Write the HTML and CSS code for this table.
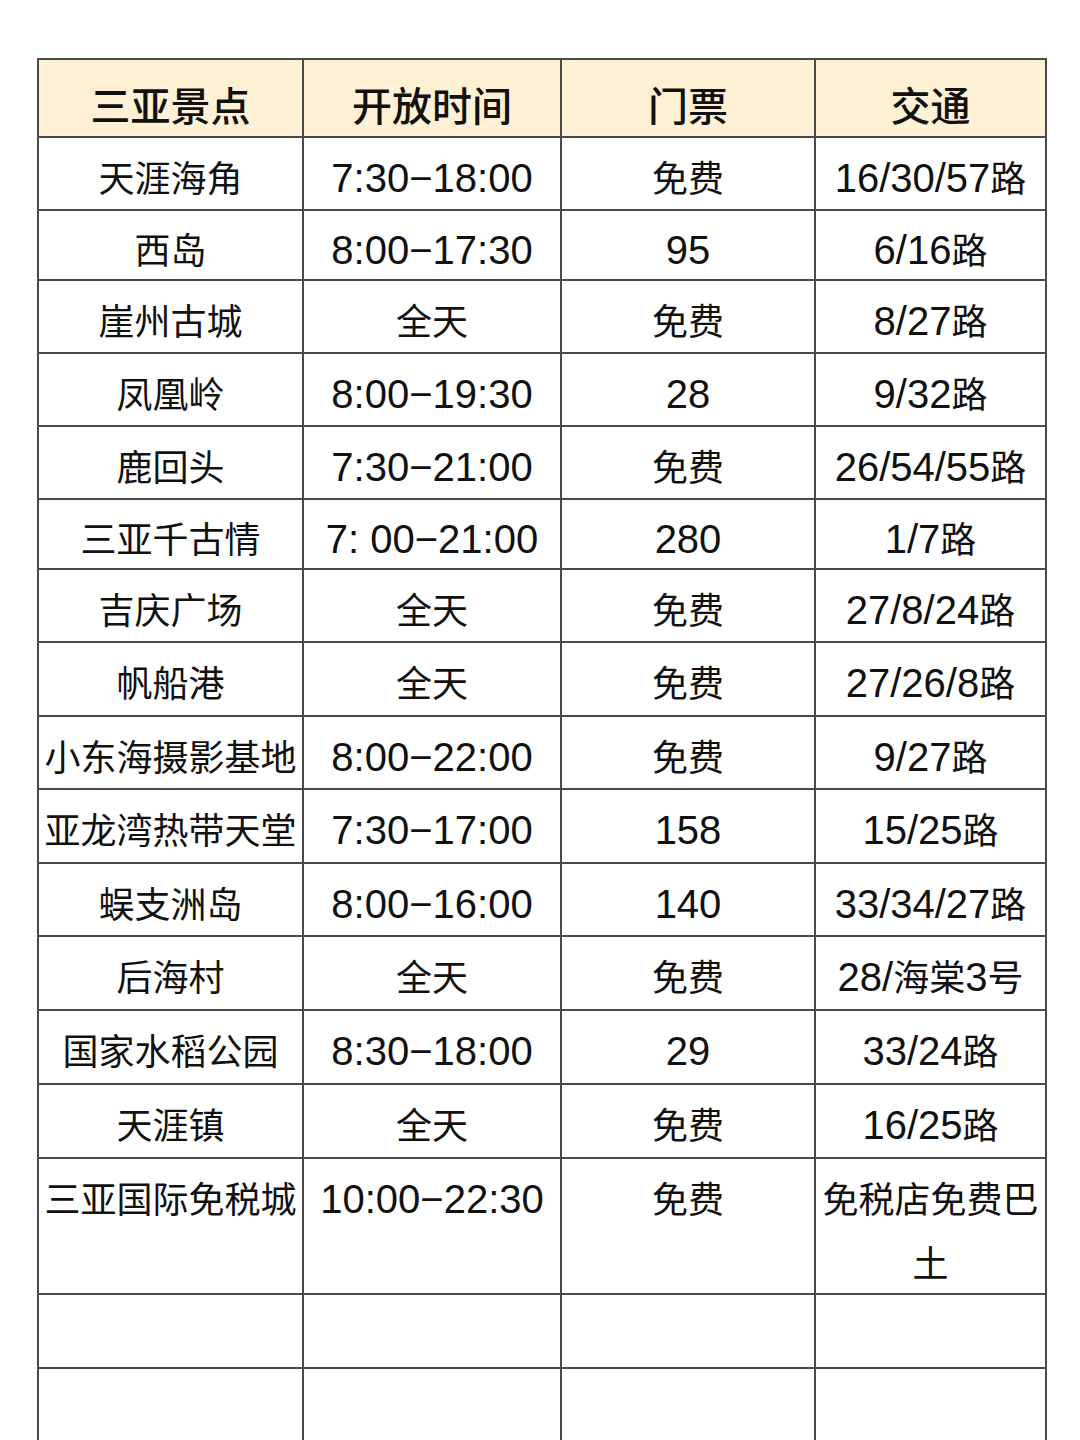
FILE: index.html
```html
<!DOCTYPE html>
<html lang="zh-CN">
<head>
<meta charset="utf-8">
<title>三亚景点</title>
<link rel="stylesheet" href="styles.css">
</head>
<body>
<table class="sheet">
  <colgroup>
    <col class="c1"><col class="c2"><col class="c3"><col class="c4">
  </colgroup>
  <thead>
    <tr class="head"><th>三亚景点</th><th>开放时间</th><th>门票</th><th>交通</th></tr>
  </thead>
  <tbody>
    <tr><td>天涯海角</td><td><span class="n">7:30−18:00</span></td><td>免费</td><td><span class="n">16/30/57</span>路</td></tr>
    <tr class="short"><td>西岛</td><td><span class="n">8:00−17:30</span></td><td><span class="n">95</span></td><td><span class="n">6/16</span>路</td></tr>
    <tr><td>崖州古城</td><td>全天</td><td>免费</td><td><span class="n">8/27</span>路</td></tr>
    <tr><td>凤凰岭</td><td><span class="n">8:00−19:30</span></td><td><span class="n">28</span></td><td><span class="n">9/32</span>路</td></tr>
    <tr><td>鹿回头</td><td><span class="n">7:30−21:00</span></td><td>免费</td><td><span class="n">26/54/55</span>路</td></tr>
    <tr class="short"><td>三亚千古情</td><td><span class="n">7: 00−21:00</span></td><td><span class="n">280</span></td><td><span class="n">1/7</span>路</td></tr>
    <tr><td>吉庆广场</td><td>全天</td><td>免费</td><td><span class="n">27/8/24</span>路</td></tr>
    <tr class="wide"><td>帆船港</td><td>全天</td><td>免费</td><td><span class="n">27/26/8</span>路</td></tr>
    <tr><td>小东海摄影基地</td><td><span class="n">8:00−22:00</span></td><td>免费</td><td><span class="n">9/27</span>路</td></tr>
    <tr class="wide"><td>亚龙湾热带天堂</td><td><span class="n">7:30−17:00</span></td><td><span class="n">158</span></td><td><span class="n">15/25</span>路</td></tr>
    <tr><td>蜈支洲岛</td><td><span class="n">8:00−16:00</span></td><td><span class="n">140</span></td><td><span class="n">33/34/27</span>路</td></tr>
    <tr class="wide"><td>后海村</td><td>全天</td><td>免费</td><td><span class="n">28/</span>海棠<span class="n">3</span>号</td></tr>
    <tr class="wide"><td>国家水稻公园</td><td><span class="n">8:30−18:00</span></td><td><span class="n">29</span></td><td><span class="n">33/24</span>路</td></tr>
    <tr class="wide"><td>天涯镇</td><td>全天</td><td>免费</td><td><span class="n">16/25</span>路</td></tr>
    <tr class="tall"><td>三亚国际免税城</td><td><span class="n">10:00−22:30</span></td><td>免费</td><td>免税店免费巴土</td></tr>
    <tr class="wide"><td></td><td></td><td></td><td></td></tr>
    <tr class="wide"><td></td><td></td><td></td><td></td></tr>
  </tbody>
</table>
</body>
</html>
```

FILE: styles.css
```css
html, body {
  margin: 0;
  padding: 0;
  background: #ffffff;
}

body {
  font-family: "Noto Sans CJK SC", "Liberation Sans", sans-serif;
  color: #111111;
  overflow: hidden;
}

.sheet {
  border-collapse: collapse;
  table-layout: fixed;
  width: 1008px;
  margin: 58px 0 0 37px;
}

.c1 { width: 265px; }
.c2 { width: 258px; }
.c3 { width: 254px; }
.c4 { width: 231px; }

.sheet th,
.sheet td {
  border: 2px solid #4a4a4a;
  padding: 7px 2px 0;
  text-align: center;
  vertical-align: top;
  font-size: 36px;
  line-height: 62px;
  font-weight: 400;
  white-space: normal;
}

.sheet .head th {
  background: #fdf0d4;
  font-size: 40px;
  font-weight: 500;
  padding-top: 14px;
  line-height: 60px;
}

.sheet .head { height: 78px; }
.sheet tbody tr { height: 73px; }
.sheet tbody tr.wide { height: 74px; }
.sheet tbody tr.short { height: 70px; }
.sheet tbody tr.short td { padding-top: 6px; }
.sheet tbody tr.tall { height: 136px; }

.sheet tbody tr.tall td {
  padding-top: 6px;
  line-height: 64px;
}

.n {
  font-family: "Liberation Sans", "Noto Sans CJK SC", sans-serif;
  font-size: 40px;
  line-height: 40px;
}
```
